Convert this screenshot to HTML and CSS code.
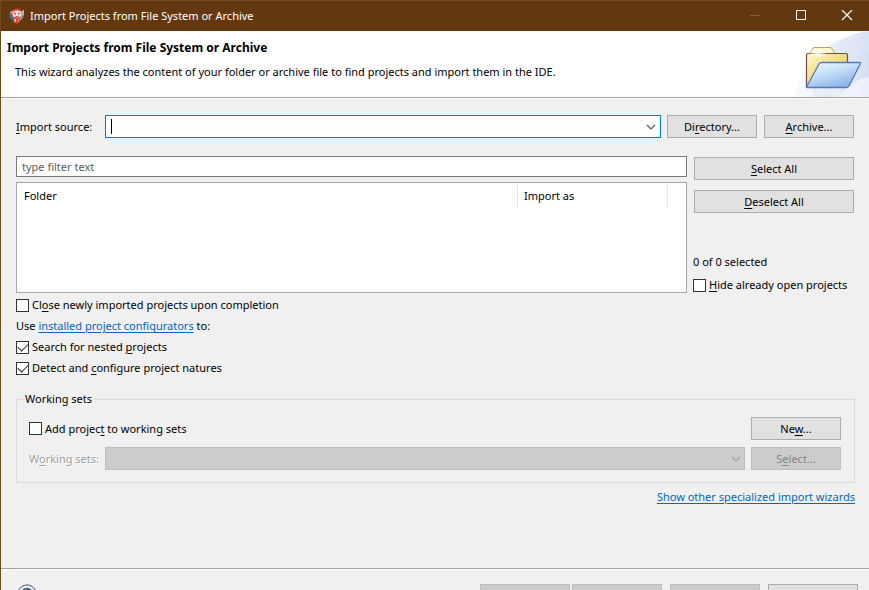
FILE: index.html
```html
<!DOCTYPE html>
<html lang="en">
<head>
<meta charset="utf-8">
<title>Import Projects from File System or Archive</title>
<link rel="stylesheet" href="styles.css">
</head>
<body>
<div class="window">
  <header class="titlebar">
    <svg class="app-icon" viewBox="0 0 16 16" aria-hidden="true">
      <path d="M1 4 4 2v7L2 8zM12 3l3-1v5l-3 4z" fill="#b9b5b5"/>
      <path d="M0 5h2l3 5v3L1 10z" fill="#20819b"/>
      <path d="M11 9l4-4-1 5-3 3z" fill="#9a9694"/>
      <path d="M4 2Q8-1 12 2l1 4-2 4v4l-3 2-4-2 1-3-3-4z" fill="#e0402c"/>
      <ellipse cx="8" cy="6" rx="4.500" ry="3.500" fill="#f6e9e6"/>
      <circle cx="6" cy="5.500" r="1" fill="#e0402c"/><circle cx="10" cy="5.500" r="1" fill="#e0402c"/>
      <path d="M6 8q2 1 4 0" stroke="#c84735" fill="none"/>
      <path d="M5 11h5l-1 3H6z" fill="#ddd2cf"/><path d="M7 11h2v4H7z" fill="#e0402c"/>
    </svg>
    <span class="titlebar-text">Import Projects from File System or Archive</span>
    <button class="win-button" type="button" aria-label="Minimize" disabled><svg viewBox="0 0 12 12"><path d="M1 5.500h10" stroke="#815d3e"/></svg></button>
    <button class="win-button" type="button" aria-label="Maximize"><svg viewBox="0 0 12 12"><path d="M1.500 .5h9v9h-9z" fill="none" stroke="#fff"/></svg></button>
    <button class="win-button" type="button" aria-label="Close"><svg viewBox="0 0 12 12"><path d="M1 0l10 10M11 0 1 10" stroke="#fff" stroke-width="1.200"/></svg></button>
  </header>

  <section class="banner">
    <div class="banner-text">
      <h1>Import Projects from File System or Archive</h1>
      <p>This wizard analyzes the content of your folder or archive file to find projects and import them in the IDE.</p>
    </div>
    <svg class="banner-art" viewBox="0 0 75 66" aria-hidden="true">
      <defs>
        <linearGradient id="sky" x1="0" x2="1" y1="0" y2="0"><stop offset="0" stop-color="#f8faff"/><stop offset=".5" stop-color="#edf1fb"/><stop offset="1" stop-color="#d5def4"/></linearGradient>
        <linearGradient id="back" x1="0" x2="1" y1="0" y2="1"><stop offset="0" stop-color="#fff7ce"/><stop offset=".5" stop-color="#f2dc7d"/><stop offset="1" stop-color="#ecd078"/></linearGradient>
        <linearGradient id="front" x1="0" x2=".6" y1="0" y2="1"><stop offset="0" stop-color="#f2fdff"/><stop offset=".45" stop-color="#c9e1fa"/><stop offset="1" stop-color="#8db2e8"/></linearGradient>
        <radialGradient id="glow"><stop offset="0" stop-color="#fff"/><stop offset="1" stop-color="#fff" stop-opacity="0"/></radialGradient>
      </defs>
      <path d="M1 66C5 34 32 7 75 0v66z" fill="url(#sky)"/>
      <path d="M31 22Q50 6 75 1v19Q50 22 36 66H19Q17 39 31 22z" fill="#dfe6f7" opacity=".45"/>
      <path d="M44 66Q61 48 75 46v20z" fill="#f3f6fd" opacity=".7"/>
      <path d="M15.500 22.500 19 17q1-.500 2-.500h15q1 0 2 1l3 5z" fill="#fcf5c8" stroke="#b9a36f"/>
      <path d="M12.500 56V24q0-1.500 1.500-1.500h38q1.500 0 1.500 1.500v31.500z" fill="url(#back)" stroke="#735044" stroke-width="1.200"/>
      <ellipse cx="24" cy="22" rx="10" ry="5" fill="url(#glow)"/>
      <path d="M12.500 56 25 33q.8-1.500 2.500-1.500h38q1.500 0 .7 1.500L55 55q-1 1.500-2.500 1.500H13.500q-1.500 0-1-.500z" fill="url(#front)" stroke="#5579bd" stroke-width="1.300"/>
    </svg>
  </section>

  <main class="content">
    <div class="source-row">
      <label class="source-label" for="source"><u>I</u>mport source:</label>
      <div class="combo">
        <span class="caret"></span>
        <input id="source" type="text">
        <button class="combo-arrow" type="button" aria-label="Show history"><svg viewBox="0 0 10 6"><path d="M1 1l4 4 4-4" fill="none" stroke="#555" stroke-width="1.200"/></svg></button>
      </div>
      <button class="button" type="button">Di<u>r</u>ectory...</button>
      <button class="button" type="button"><u>A</u>rchive...</button>
    </div>

    <div class="projects">
      <div class="projects-main">
        <input class="filter" type="text" placeholder="type filter text" aria-label="Filter">
        <div class="table-box">
          <table>
            <thead><tr><th class="col-folder">Folder</th><th class="col-import">Import as</th><td></td></tr></thead>
          </table>
        </div>
      </div>
      <div class="projects-side">
        <button class="button" type="button"><u>S</u>elect All</button>
        <button class="button" type="button"><u>D</u>eselect All</button>
        <p class="count">0 of 0 selected</p>
        <label class="check"><input type="checkbox"><span><u>H</u>ide already open projects</span></label>
      </div>
    </div>

    <div class="options">
      <label class="check"><input type="checkbox"><span>Cl<u>o</u>se newly imported projects upon completion</span></label>
      <p>Use <a href="#configurators">installed project configurators</a> to:</p>
      <label class="check"><input type="checkbox" checked><span>Search for nested <u>p</u>rojects</span></label>
      <label class="check"><input type="checkbox" checked><span>Detect and <u>c</u>onfigure project natures</span></label>
    </div>

    <fieldset class="sets">
      <legend>Working sets</legend>
      <div class="sets-row">
        <label class="check"><input type="checkbox"><span>Add projec<u>t</u> to working sets</span></label>
        <button class="button" type="button">Ne<u>w</u>...</button>
      </div>
      <div class="sets-row">
        <label class="sets-label" for="sets">W<u>o</u>rking sets:</label>
        <div class="select-box">
          <select id="sets" disabled></select>
          <svg viewBox="0 0 10 6" aria-hidden="true"><path d="M1 1l4 4 4-4" fill="none" stroke="#a3a3a3" stroke-width="1.200"/></svg>
        </div>
        <button class="button" type="button" disabled>S<u>e</u>lect...</button>
      </div>
    </fieldset>
    <a class="more" href="#wizards">Show other specialized import wizards</a>
  </main>

  <footer class="footer">
    <button class="help" type="button" aria-label="Help"><svg viewBox="0 0 20 20"><circle cx="10" cy="10" r="9" fill="#f5f6f8" stroke="#75839c" stroke-width="1.300"/><path d="M6.200 8.500Q6.200 5 10 5T13.500 8.500Q13.500 10 11.500 11 10 11.700 10 13M10 14.500v2" fill="none" stroke="#516584" stroke-width="2.600"/></svg></button>
    <div class="nav">
      <button class="button" type="button" aria-label="Back" disabled></button>
      <button class="button" type="button" aria-label="Next" disabled></button>
    </div>
    <button class="button" type="button" aria-label="Finish" disabled></button>
    <button class="button" type="button" aria-label="Cancel"></button>
  </footer>
</div>
</body>
</html>
```
FILE: styles.css
```css
* { box-sizing: border-box; }

body {
  margin: 0;
  overflow: hidden;
  background: #f0f0f0;
  color: #000;
  font: 11px/16px "Noto Sans", "Open Sans", sans-serif;
}

h1, p { margin: 0; }
button, input, select { font: inherit; color: inherit; margin: 0; border-radius: 0; }
svg { display: block; }
u { text-underline-offset: 2px; text-decoration-thickness: 1px; }
a { color: #0066cc; text-underline-offset: 2px; text-decoration-thickness: 1px; }

.window {
  height: 100vh;
  overflow: hidden;
  border-left: 1px solid #75491f;
}

.titlebar {
  display: flex;
  align-items: center;
  height: 31px;
  padding-left: 8px;
  border-top: 1px solid #754b28;
  background: #633810;
  color: #fff;
}
.app-icon { width: 16px; height: 16px; }
.titlebar-text { flex: 1; margin-left: 5px; white-space: nowrap; }
.win-button {
  display: flex;
  align-items: center;
  width: 46px;
  height: 30px;
  padding: 0 0 0 18px;
  border: 0;
  background: none;
}
.win-button svg { width: 12px; height: 12px; }

.banner {
  display: flex;
  justify-content: space-between;
  height: 67px;
  background: #fff;
  border-bottom: 1px solid #a0a0a0;
}
.banner-text { padding: 9px 0 0 6px; white-space: nowrap; }
.banner h1 { font-size: 12px; line-height: 16px; font-weight: 700; }
.banner p { margin: 8px 0 0 8px; }
.banner-art { width: 75px; height: 66px; flex: none; }

.content {
  display: flex;
  flex-direction: column;
  padding: 16px 14px 63px 15px;
  border-top: 1px solid #fff;
}

.button {
  width: 90px;
  height: 23px;
  padding: 0 4px;
  flex: none;
  border: 1px solid #adadad;
  background: #e1e1e1;
  line-height: 20px;
}
.button:disabled { border-color: #bfbfbf; background: #ccc; color: #838383; }

.source-row { display: flex; align-items: center; gap: 7px; padding-right: 1px; }
.source-label { width: 82px; white-space: nowrap; }
.combo {
  position: relative;
  display: flex;
  flex: 1;
  height: 23px;
  margin-right: -1px;
  border: 1px solid #0078d7;
  background: #fff;
}
.combo input { flex: 1; min-width: 0; padding: 0 5px; border: 0; outline: 0; background: none; }
.caret { position: absolute; left: 5px; top: 3px; width: 1px; height: 15px; background: #000; }
.combo-arrow { width: 17px; padding: 0 4px 0 3px; border: 0; background: none; }
.combo-arrow svg, .select-box svg { width: 10px; height: 6px; }

.projects { display: flex; gap: 7px; margin-top: 18px; padding-right: 1px; }
.projects-main { flex: 1; min-width: 0; }
.filter {
  display: block;
  width: 100%;
  height: 21px;
  padding: 0 5px;
  border: 1px solid #7a7a7a;
  background: #fff;
}
.filter::placeholder { color: #606060; opacity: 1; }
.table-box {
  height: 111px;
  margin-top: 5px;
  padding-top: 1px;
  border: 1px solid #a6a8b0;
  background: #fff;
}
table { width: 100%; border-collapse: separate; border-spacing: 0; table-layout: fixed; }
th {
  height: 24px;
  padding: 0 7px;
  border-right: 1px solid #e5e5e5;
  font-weight: 400;
  text-align: left;
}
.col-import { width: 150px; padding: 0 6px; }
thead td { width: 18px; padding: 0; }

.projects-side { display: flex; flex-direction: column; width: 160px; padding-top: 1px; }
.projects-side .button { width: 100%; margin-bottom: 10px; }
.count { margin-top: 31px; }
.projects-side .check { margin-top: 7px; }
.count, .projects-side .check { margin-left: -1px; }

.check { display: flex; align-items: center; gap: 3px; white-space: nowrap; }
.check input {
  appearance: none;
  width: 13px;
  height: 13px;
  flex: none;
  border: 1px solid #333;
  background: #fff;
}
.check input:checked::before {
  content: "";
  display: block;
  width: 9px;
  height: 5px;
  margin: 1px;
  border: solid #333;
  border-width: 0 0 1px 1px;
  transform: rotate(-45deg);
}

.options { display: grid; gap: 5px; margin-top: 4px; }

.sets {
  min-width: 0;
  margin: 15px 0 0;
  padding: 10px 13px 12px 12px;
  border: 1px solid #dcdcdc;
}
.sets legend { margin-left: -6px; padding: 0 2px; }
.sets-row { display: flex; align-items: center; justify-content: space-between; gap: 6px; }
.sets-row + .sets-row { margin-top: 7px; }
.sets-label { width: 70px; color: #a0a0a0; white-space: nowrap; text-shadow: 1px 1px #fff; }
.select-box { position: relative; flex: 1; }
.select-box select {
  appearance: none;
  display: block;
  width: 100%;
  height: 23px;
  border: 1px solid #bfbfbf;
  background: #ccc;
  opacity: 1;
}
.select-box svg { position: absolute; right: 4px; top: 9px; }
.more { align-self: flex-end; margin-top: 6px; }

.footer {
  display: flex;
  align-items: flex-start;
  gap: 8px;
  padding: 15px 11px 14px 16px;
  border-top: 1px solid #a0a0a0;
  box-shadow: inset 0 1px #fff;
}
.help { width: 20px; height: 20px; margin-right: auto; padding: 0; border: 0; background: none; }
.nav { display: flex; gap: 2px; }
```
